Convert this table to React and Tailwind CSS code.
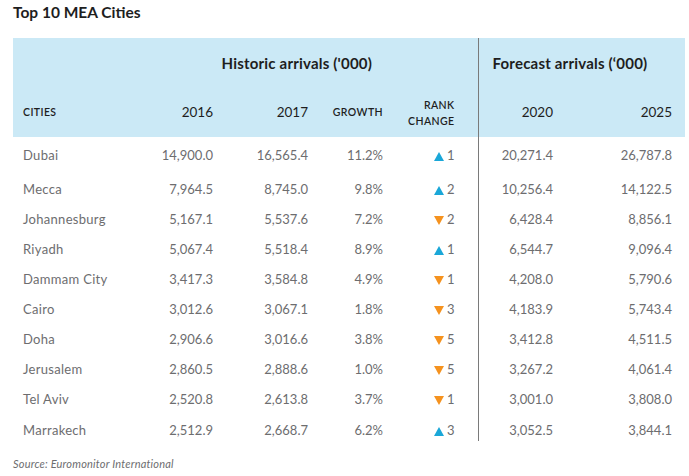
import React from "react";

const rows = [
  ["Dubai", "14,900.0", "16,565.4", "11.2%", "up", 1, "20,271.4", "26,787.8"],
  ["Mecca", "7,964.5", "8,745.0", "9.8%", "up", 2, "10,256.4", "14,122.5"],
  ["Johannesburg", "5,167.1", "5,537.6", "7.2%", "down", 2, "6,428.4", "8,856.1"],
  ["Riyadh", "5,067.4", "5,518.4", "8.9%", "up", 1, "6,544.7", "9,096.4"],
  ["Dammam City", "3,417.3", "3,584.8", "4.9%", "down", 1, "4,208.0", "5,790.6"],
  ["Cairo", "3,012.6", "3,067.1", "1.8%", "down", 3, "4,183.9", "5,743.4"],
  ["Doha", "2,906.6", "3,016.6", "3.8%", "down", 5, "3,412.8", "4,511.5"],
  ["Jerusalem", "2,860.5", "2,888.6", "1.0%", "down", 5, "3,267.2", "4,061.4"],
  ["Tel Aviv", "2,520.8", "2,613.8", "3.7%", "down", 1, "3,001.0", "3,808.0"],
  ["Marrakech", "2,512.9", "2,668.7", "6.2%", "up", 3, "3,052.5", "3,844.1"],
];

function Arrow({ dir }) {
  return (
    <svg width="10" height="9" viewBox="0 0 10 9" className="inline-block mr-[3px] align-[-1px]">
      {dir === "up" ? (
        <polygon points="5,0 10,9 0,9" fill="#1aa7d8" />
      ) : (
        <polygon points="0,0 10,0 5,9" fill="#f5921e" />
      )}
    </svg>
  );
}

export default function App() {
  return (
    <div className="w-[689px] h-[476px] bg-white font-['Lato','Open_Sans',sans-serif] relative">
      <h1 className="pl-[13px] pt-[3px] text-[15.5px] font-bold text-[#1e1e1e] leading-[18px]">
        Top 10 MEA Cities
      </h1>
      <table className="ml-[13px] mt-[17px] w-[672px] table-fixed border-collapse">
        <colgroup>
          <col className="w-[107px]" />
          <col className="w-[103px]" />
          <col className="w-[95px]" />
          <col className="w-[75px]" />
          <col className="w-[85px]" />
          <col className="w-[85px]" />
          <col className="w-[122px]" />
        </colgroup>
        <thead className="bg-[#cbe9f6] text-[#1e1e1e]">
          <tr className="h-[50px]">
            <th></th>
            <th colSpan={4} className="text-center text-[15px] font-bold tracking-[0.2px] pt-[1px] pr-[4px] border-r border-[#7a7a7a]">
              Historic arrivals ('000)
            </th>
            <th colSpan={2} className="text-left pl-[14px] text-[15px] font-bold tracking-[0.2px] pt-[1px]">
              Forecast arrivals (‘000)
            </th>
          </tr>
          <tr className="h-[49px]">
            <th className="text-left pl-[10px] text-[10.5px] font-semibold tracking-[0.4px]">CITIES</th>
            <th className="text-right pr-[10px] text-[13.5px] font-normal">2016</th>
            <th className="text-right pr-[10px] text-[13.5px] font-normal">2017</th>
            <th className="text-right pr-[10px] text-[10.5px] font-semibold tracking-[0.4px]">GROWTH</th>
            <th className="text-right pr-[23px] text-[10.5px] font-semibold tracking-[0.4px] leading-[16px] border-r border-[#7a7a7a]">
              RANK
              <br />
              CHANGE
            </th>
            <th className="text-right pr-[10px] text-[13.5px] font-normal">2020</th>
            <th className="text-right pr-[13px] text-[13.5px] font-normal">2025</th>
          </tr>
        </thead>
        <tbody className="text-[13px] text-[#6d6d6f]">
          {rows.map((r, i) => {
            const first = i === 0;
            const last = i === rows.length - 1;
            const h = first ? "h-[38px]" : last ? "h-[22px] align-top pt-[6px]" : "h-[30px]";
            return (
              <tr key={r[0]}>
                <td className={`${h} text-left pl-[10px] tracking-[0.3px]`}>{r[0]}</td>
                <td className={`${h} text-right pr-[10px]`}>{r[1]}</td>
                <td className={`${h} text-right pr-[10px]`}>{r[2]}</td>
                <td className={`${h} text-right pr-[10px]`}>{r[3]}</td>
                <td className={`${h} text-right pr-[23px] border-r border-[#7a7a7a]`}>
                  <Arrow dir={r[4]} />
                  {r[5]}
                </td>
                <td className={`${h} text-right pr-[10px]`}>{r[6]}</td>
                <td className={`${h} text-right pr-[13px]`}>{r[7]}</td>
              </tr>
            );
          })}
        </tbody>
      </table>
      <p className="pl-[13px] mt-[15px] text-[11px] italic text-[#6d6d6f] tracking-[0.2px]">Source: Euromonitor International</p>
    </div>
  );
}
